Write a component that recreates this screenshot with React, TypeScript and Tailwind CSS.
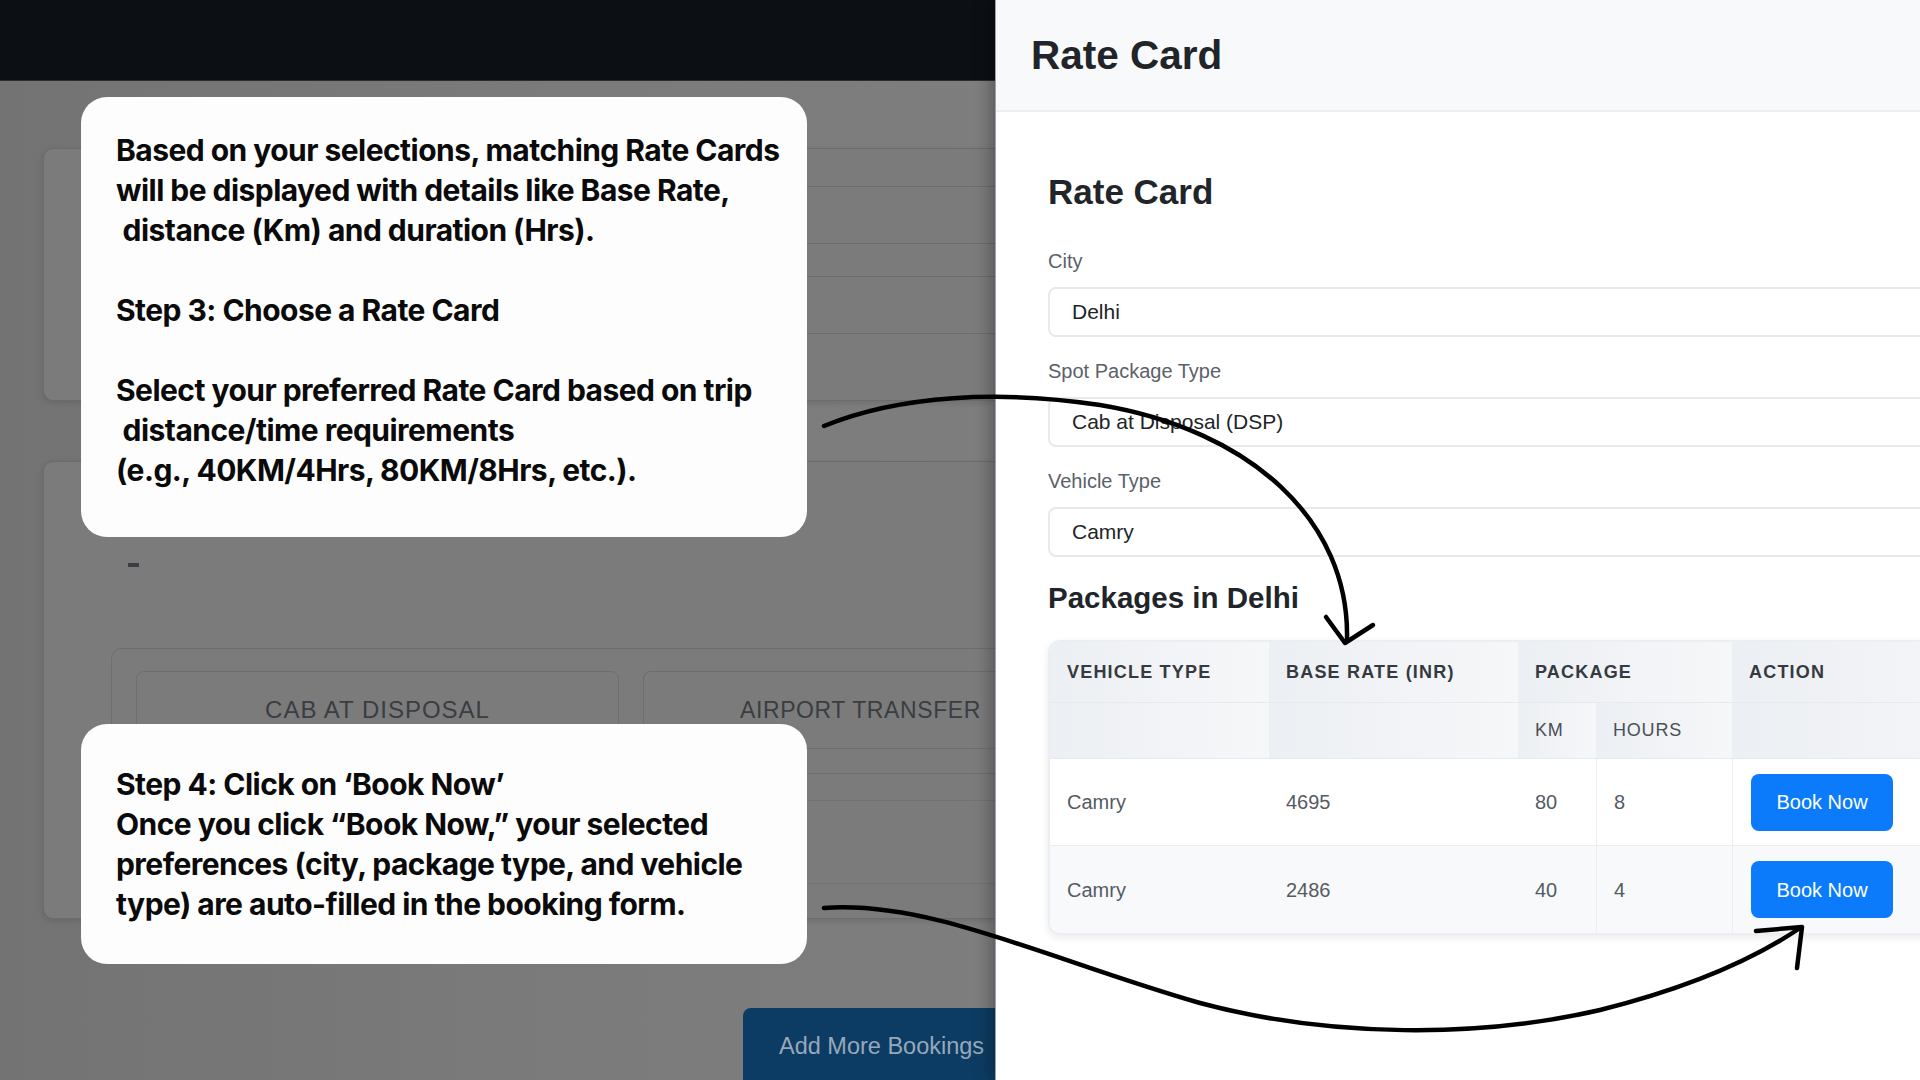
import React from "react";

const calloutFont = { fontFamily: "Inter, 'Noto Sans', sans-serif" };

function Callout1() {
  return (
    <div
      className="absolute left-[81px] top-[97px] w-[726px] h-[440px] rounded-[26px] bg-[#fdfdfd] pl-[35px] pt-[33px] text-[30px] font-bold leading-[40px] tracking-[-0.018em] text-[#0a0a0a] whitespace-pre"
      style={calloutFont}
    >
      <div>Based on your selections, matching Rate Cards</div>
      <div>will be displayed with details like Base Rate,</div>
      <div> distance (Km) and duration (Hrs).</div>
      <div className="h-[40px]" />
      <div>Step 3: Choose a Rate Card</div>
      <div className="h-[40px]" />
      <div>Select your preferred Rate Card based on trip</div>
      <div> distance/time requirements</div>
      <div>(e.g., 40KM/4Hrs, 80KM/8Hrs, etc.).</div>
    </div>
  );
}

function Callout2() {
  return (
    <div
      className="absolute left-[81px] top-[724px] w-[726px] h-[240px] rounded-[26px] bg-[#fdfdfd] pl-[35px] pt-[40px] text-[30px] font-bold leading-[40px] tracking-[-0.018em] text-[#0a0a0a] whitespace-pre"
      style={calloutFont}
    >
      <div>Step 4: Click on ‘Book Now’</div>
      <div>Once you click “Book Now,” your selected</div>
      <div>preferences (city, package type, and vehicle</div>
      <div>type) are auto-filled in the booking form.</div>
    </div>
  );
}

function Arrows() {
  return (
    <svg
      className="absolute left-0 top-0 pointer-events-none"
      width="1920"
      height="1080"
      viewBox="0 0 1920 1080"
      fill="none"
    >
      <g stroke="#000" strokeWidth="4.5" strokeLinecap="round" strokeLinejoin="round">
        <path d="M824 426 C900 395 1000 390 1100 405 C1250 430 1350 520 1347 640" />
        <path d="M1326 617 L1345 643 L1373 625" />
        <path d="M824 908 C930 900 1050 960 1200 1003 C1330 1038 1480 1038 1600 1010 C1700 985 1760 955 1800 928" />
        <path d="M1756 931 L1802 927 L1797 968" />
      </g>
    </svg>
  );
}

function LeftPage() {
  const f = { fontFamily: "'Liberation Sans', Arial, sans-serif" };
  return (
    <div className="w-[995px] shrink-0 flex flex-col bg-gradient-to-r from-[#737373] via-[#7a7a7a] to-[#7e7e7e]">
      <div className="h-[82px] bg-[#0c0f14] border-b border-[#2a2d33]" />
      <div className="flex flex-col pl-[43px] pt-[67px]">
        <div className="h-[253px] rounded-l-[10px] border border-r-0 border-[#6c6c6c] bg-[#7b7b7b] shadow-[0_2px_6px_rgba(0,0,0,0.12)] pl-[40px] pt-[37px] flex flex-col gap-[32px]">
          <div className="h-[58px] rounded-l-[6px] border border-r-0 border-[#6c6c6c]" />
          <div className="h-[58px] rounded-l-[6px] border border-r-0 border-[#6c6c6c]" />
        </div>
        <div className="mt-[60px] h-[458px] rounded-l-[10px] border border-r-0 border-[#6c6c6c] bg-[#7b7b7b] shadow-[0_2px_6px_rgba(0,0,0,0.12)] flex flex-col">
          <div className="pl-[84px] pt-[101px] h-[115px]">
            <div className="w-[11px] h-[4px] bg-[#3a3d42]" />
          </div>
          <div className="ml-[67px] mt-[71px] h-[126px] rounded-l-[10px] border border-r-0 border-[#6e6e6e] pl-[24px] pt-[22px] flex gap-[24px]">
            <div className="w-[483px] h-[78px] rounded-[8px] border border-[#6e6e6e] flex items-center justify-center text-[24px] tracking-[1px] text-[#3a3d42]" style={f}>
              CAB AT DISPOSAL
            </div>
            <div className="flex-1 h-[78px] rounded-l-[8px] border border-r-0 border-[#6e6e6e] flex items-center pl-[96px] text-[23px] tracking-[0.6px] text-[#3a3d42] whitespace-nowrap" style={f}>
              AIRPORT TRANSFER
            </div>
          </div>
          <div className="ml-[67px] mt-[26px] h-[84px] border-t border-b border-[#717171]" />
        </div>
        <div className="flex justify-end mt-[89px]">
          <div
            className="w-[252px] h-[72px] rounded-tl-[8px] bg-[#0c3c63] flex items-start pt-[21px] pl-[36px] text-[23.5px] text-[#97a8ba] whitespace-nowrap"
            style={f}
          >
            Add More Bookings
          </div>
        </div>
      </div>
    </div>
  );
}

function Field({ label, value }: { label: string; value: string }) {
  return (
    <div className="flex flex-col">
      <div className="text-[20px] leading-[24px] text-[#5b6169]">{label}</div>
      <div className="mt-[14px] h-[50px] rounded-[8px] border-2 border-[#e6e9ed] bg-white flex items-center pl-[22px] text-[21px] text-[#212529]">
        {value}
      </div>
    </div>
  );
}

function RightPanel() {
  const th = "bg-gradient-to-r from-[#eceff3] to-[#f6f7f9]";
  const rows = [
    { v: "Camry", rate: "4695", km: "80", hrs: "8", bg: "bg-white" },
    { v: "Camry", rate: "2486", km: "40", hrs: "4", bg: "bg-[#f8f9fb]" },
  ];
  return (
    <div
      className="flex-1 bg-white overflow-hidden relative shadow-[-6px_0_14px_rgba(0,0,0,0.25)] border-l border-[#9aa3ad]"
      style={{ fontFamily: "'Liberation Sans', Arial, sans-serif" }}
    >
      <div className="h-[112px] bg-[#f8f9fa] border-b-2 border-[#eceef1] flex items-center pl-[35px]">
        <div className="text-[40.5px] font-bold text-[#212529] leading-none">Rate Card</div>
      </div>
      <div className="w-[1100px] pl-[52px] pt-[59px] flex flex-col">
        <div className="text-[35px] leading-[42px] font-bold text-[#212529]">Rate Card</div>
        <div className="mt-[36px] flex flex-col gap-[22px]">
          <Field label="City" value="Delhi" />
          <Field label="Spot Package Type" value="Cab at Disposal (DSP)" />
          <Field label="Vehicle Type" value="Camry" />
        </div>
        <div className="mt-[24px] text-[29.5px] leading-[34px] font-bold text-[#212529]">Packages in Delhi</div>
        <div className="mt-[25px] rounded-[12px] border-2 border-[#eceef1] shadow-[0_3px_8px_rgba(0,0,0,0.08)] overflow-hidden w-[1000px]">
          <div className="flex h-[61px] text-[18px] font-bold tracking-[1.2px] text-[#343a40] border-b border-[#e6e9ed]">
            <div className={`w-[219px] flex items-center pl-[17px] ${th}`}>VEHICLE TYPE</div>
            <div className={`w-[249px] flex items-center pl-[17px] ${th}`}>BASE RATE (INR)</div>
            <div className={`w-[214px] flex items-center pl-[17px] ${th}`}>PACKAGE</div>
            <div className={`flex-1 flex items-center pl-[17px] ${th}`}>ACTION</div>
          </div>
          <div className="flex h-[56px] text-[18px] tracking-[0.8px] text-[#495057] border-b border-[#e6e9ed]">
            <div className={`w-[219px] ${th}`} />
            <div className={`w-[249px] ${th}`} />
            <div className={`w-[78px] flex items-center pl-[17px] ${th}`}>KM</div>
            <div className={`w-[136px] flex items-center pl-[17px] ${th}`}>HOURS</div>
            <div className={`flex-1 ${th}`} />
          </div>
          {rows.map((r, i) => (
            <div
              key={i}
              className={`flex h-[87px] text-[20px] text-[#555b62] ${r.bg} ${i === 0 ? "border-b border-[#eceef1]" : ""}`}
            >
              <div className="w-[219px] flex items-center pl-[17px]">{r.v}</div>
              <div className="w-[249px] flex items-center pl-[17px]">{r.rate}</div>
              <div className="w-[78px] flex items-center pl-[17px]">{r.km}</div>
              <div className="w-[136px] flex items-center pl-[17px] border-l border-[#eceef1]">{r.hrs}</div>
              <div className="flex-1 flex items-center pl-[18px] border-l border-[#eceef1]">
                <div className="w-[142px] h-[57px] rounded-[8px] bg-[#0b7bfc] text-white flex items-center justify-center text-[20px]">
                  Book Now
                </div>
              </div>
            </div>
          ))}
        </div>
      </div>
    </div>
  );
}

export default function App() {
  return (
    <div className="relative w-[1920px] h-[1080px] overflow-hidden flex">
      <LeftPage />
      <RightPanel />
      <Callout1 />
      <Callout2 />
      <Arrows />
    </div>
  );
}
